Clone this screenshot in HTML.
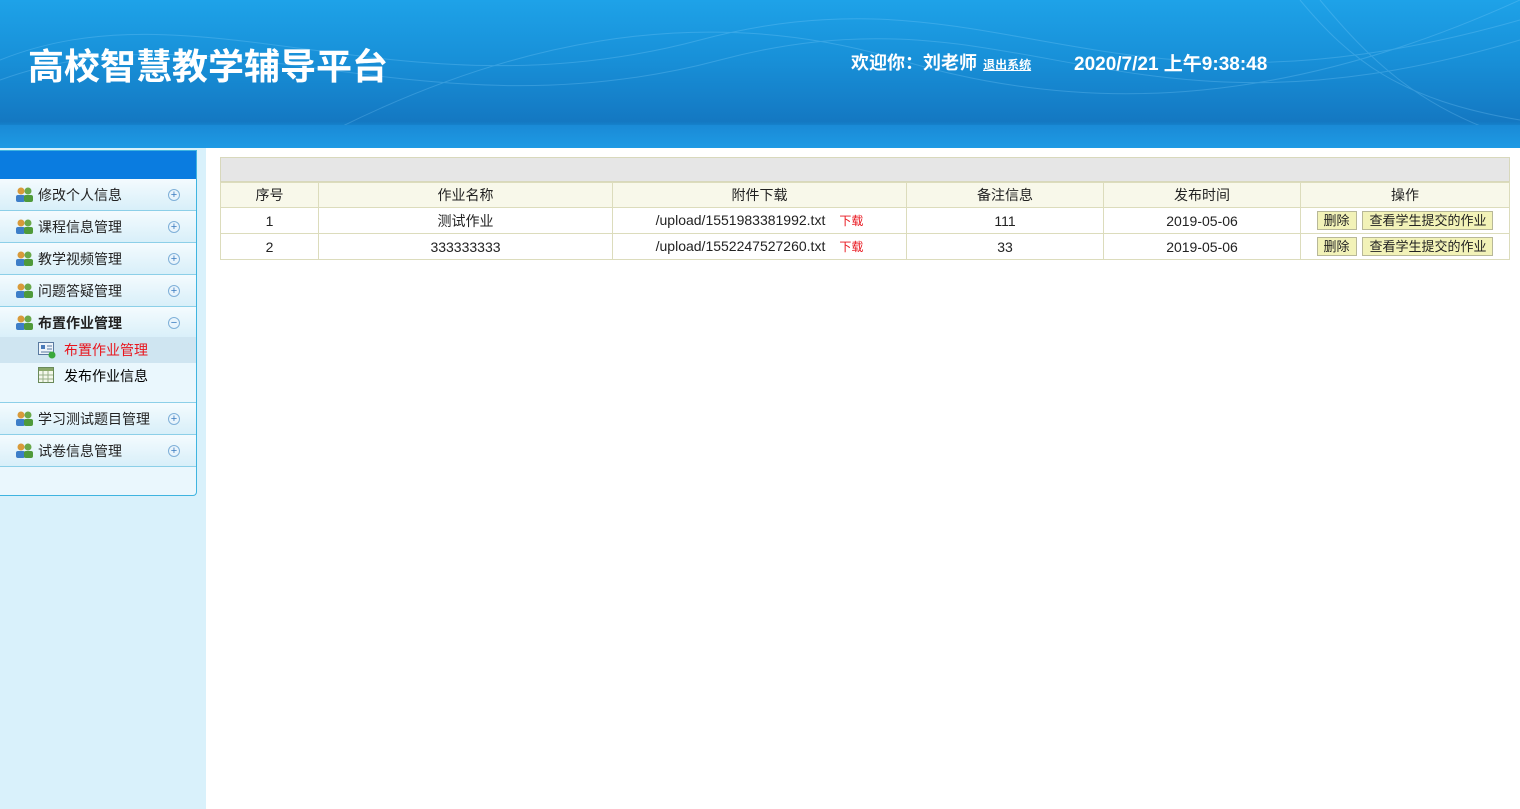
<!DOCTYPE html>
<html><head><meta charset="utf-8"><style>
*{margin:0;padding:0;box-sizing:border-box}
body{width:1520px;height:809px;overflow:hidden;background:#fff;font-family:"Liberation Sans","Noto Sans CJK SC",sans-serif;position:relative}
.hd{position:absolute;left:0;top:0;width:1520px;height:148px;background:linear-gradient(180deg,#1ea2e8 0%,#1890d8 40%,#1478c2 82%,#1583cd 85%,#1b95e0 100%);overflow:hidden}
.hd .band{position:absolute;left:0;top:125px;width:100%;height:23px;background:linear-gradient(180deg,#1a8ad6,#1e9ae4)}
.title{position:absolute;left:28px;top:38px;color:#fff;font-size:36px;font-weight:bold;font-family:"Noto Sans CJK SC",sans-serif}
.wel{position:absolute;left:851px;top:49px;color:#fff;font-size:18px;font-weight:bold;font-family:"Noto Sans CJK SC",sans-serif}
.wel a{font-size:12px;color:#fff;text-decoration:underline;margin-left:2px}
.time{position:absolute;left:1074px;top:49px;color:#fff;font-size:19px;font-weight:bold;font-family:"Liberation Sans","Noto Sans CJK SC",sans-serif}
.side{position:absolute;left:0;top:148px;width:206px;height:661px;background:#d9f1fb}
.panel{position:absolute;left:0;top:150px;width:197px;height:346px;border:1px solid #3fb4e0;border-left:none;border-radius:0 0 4px 0;background:#eaf7fd;overflow:hidden}
.pt{height:28px;background:#0a7ce0}
.it{height:32px;border-bottom:1px solid #8ccfe8;background:linear-gradient(180deg,#f4fbfe,#d8eff9);position:relative;font-size:14px;color:#222;padding-left:38px;line-height:32px}
.it b{font-weight:bold}
.ic{position:absolute;left:16px;top:8px;width:17px;height:16px}
.pl{position:absolute;left:168px;top:10px;width:12px;height:12px;border:1px solid #7fb0d8;border-radius:50%;background:#e8f4fc;font-size:11px;line-height:10px;text-align:center;color:#3a7cc0}
.sub{height:66px;background:#eaf7fd;border-bottom:1px solid #8ccfe8;position:relative;margin-top:-2px}
.si{height:26px;line-height:26px;font-size:14px;padding-left:64px;position:relative}
.si.on{background:#cfe5f1;color:#e8141c}
.main{position:absolute;left:220px;top:157px;width:1290px}
.bar{height:25px;background:#e6e6e6;border:1px solid #d8d8bc}
table{border-collapse:collapse;width:1290px;font-size:14px;color:#222}
td,th{border:1px solid #dcdcbc;text-align:center;font-weight:normal;height:26px}
th{background:#f8f8ea;height:25px}
.btn{display:inline-block;border:1px solid #b8b898;background:#f2f2b8;padding:0 6px;height:19px;line-height:17px;font-size:13px;margin:0 1px}
.dl{color:#e8141c;font-size:12px;margin-left:14px}
</style></head><body>
<div class="hd">
<svg width="1520" height="148" style="position:absolute;left:0;top:0;opacity:.25">
<g fill="none" stroke="#8fd6ff" stroke-width="1">
<path d="M0 60 C200 -20 400 120 700 40 S1100 140 1520 20"/>
<path d="M0 80 C220 0 420 140 720 60 S1120 160 1520 40"/>
<path d="M300 148 C500 40 700 0 900 60 S1300 100 1520 0"/>
<path d="M1300 0 C1350 60 1400 100 1520 120"/>
<path d="M1320 0 C1370 60 1420 110 1520 140"/>
</g></svg>
<div class="band"></div>
<div class="title">高校智慧教学辅导平台</div>
<div class="wel">欢迎你：刘老师 <a>退出系统</a></div>
<div class="time">2020/7/21 上午9:38:48</div>
</div>
<div class="side"></div>
<div class="panel">
<div class="pt"></div>
<div class="it"><svg class="ic"><circle cx="5" cy="4" r="3.5" fill="#d89a3a"/><circle cx="12" cy="4" r="3.5" fill="#6aa84a"/><rect x="0" y="8" width="9" height="7" rx="2" fill="#3d7ec8"/><rect x="8" y="8" width="9" height="7" rx="2" fill="#4f9a3a"/></svg>修改个人信息<span class="pl">+</span></div>
<div class="it"><svg class="ic"><circle cx="5" cy="4" r="3.5" fill="#d89a3a"/><circle cx="12" cy="4" r="3.5" fill="#6aa84a"/><rect x="0" y="8" width="9" height="7" rx="2" fill="#3d7ec8"/><rect x="8" y="8" width="9" height="7" rx="2" fill="#4f9a3a"/></svg>课程信息管理<span class="pl">+</span></div>
<div class="it"><svg class="ic"><circle cx="5" cy="4" r="3.5" fill="#d89a3a"/><circle cx="12" cy="4" r="3.5" fill="#6aa84a"/><rect x="0" y="8" width="9" height="7" rx="2" fill="#3d7ec8"/><rect x="8" y="8" width="9" height="7" rx="2" fill="#4f9a3a"/></svg>教学视频管理<span class="pl">+</span></div>
<div class="it"><svg class="ic"><circle cx="5" cy="4" r="3.5" fill="#d89a3a"/><circle cx="12" cy="4" r="3.5" fill="#6aa84a"/><rect x="0" y="8" width="9" height="7" rx="2" fill="#3d7ec8"/><rect x="8" y="8" width="9" height="7" rx="2" fill="#4f9a3a"/></svg>问题答疑管理<span class="pl">+</span></div>
<div class="it" style="border-bottom:none"><svg class="ic"><circle cx="5" cy="4" r="3.5" fill="#d89a3a"/><circle cx="12" cy="4" r="3.5" fill="#6aa84a"/><rect x="0" y="8" width="9" height="7" rx="2" fill="#3d7ec8"/><rect x="8" y="8" width="9" height="7" rx="2" fill="#4f9a3a"/></svg><b>布置作业管理</b><span class="pl">−</span></div>
<div class="sub">
<div class="si on"><svg style="position:absolute;left:38px;top:5px" width="18" height="17"><rect x="0.5" y="0.5" width="15" height="12" fill="#eef4fa" stroke="#5a7aa0"/><rect x="3" y="3" width="4" height="4" fill="#4a7ab8"/><path d="M9 4h5M9 7h5M3 10h10" stroke="#5a7aa0"/><circle cx="14" cy="13" r="3.5" fill="#3aa83a"/></svg><span style="color:#e8141c">布置作业管理</span></div>
<div class="si"><svg style="position:absolute;left:38px;top:4px" width="17" height="17"><rect x="0.5" y="0.5" width="15" height="15" fill="#f4f8ec" stroke="#6a8a5a"/><rect x="1" y="1" width="14" height="3" fill="#8aa86a"/><path d="M1 8h14M1 12h14M5 4v11M10 4v11" stroke="#9ab08a"/></svg>发布作业信息</div>
</div>
<div class="it"><svg class="ic"><circle cx="5" cy="4" r="3.5" fill="#d89a3a"/><circle cx="12" cy="4" r="3.5" fill="#6aa84a"/><rect x="0" y="8" width="9" height="7" rx="2" fill="#3d7ec8"/><rect x="8" y="8" width="9" height="7" rx="2" fill="#4f9a3a"/></svg>学习测试题目管理<span class="pl">+</span></div>
<div class="it"><svg class="ic"><circle cx="5" cy="4" r="3.5" fill="#d89a3a"/><circle cx="12" cy="4" r="3.5" fill="#6aa84a"/><rect x="0" y="8" width="9" height="7" rx="2" fill="#3d7ec8"/><rect x="8" y="8" width="9" height="7" rx="2" fill="#4f9a3a"/></svg>试卷信息管理<span class="pl">+</span></div>
</div>
<div class="main">
<div class="bar"></div>
<table>
<tr><th style="width:98px">序号</th><th style="width:294px">作业名称</th><th style="width:294px">附件下载</th><th style="width:197px">备注信息</th><th style="width:197px">发布时间</th><th>操作</th></tr>
<tr><td>1</td><td>测试作业</td><td>/upload/1551983381992.txt<span class="dl">下载</span></td><td>111</td><td>2019-05-06</td><td><span class="btn">删除</span> <span class="btn">查看学生提交的作业</span></td></tr>
<tr><td>2</td><td>333333333</td><td>/upload/1552247527260.txt<span class="dl">下载</span></td><td>33</td><td>2019-05-06</td><td><span class="btn">删除</span> <span class="btn">查看学生提交的作业</span></td></tr>
</table>
</div>
</body></html>
